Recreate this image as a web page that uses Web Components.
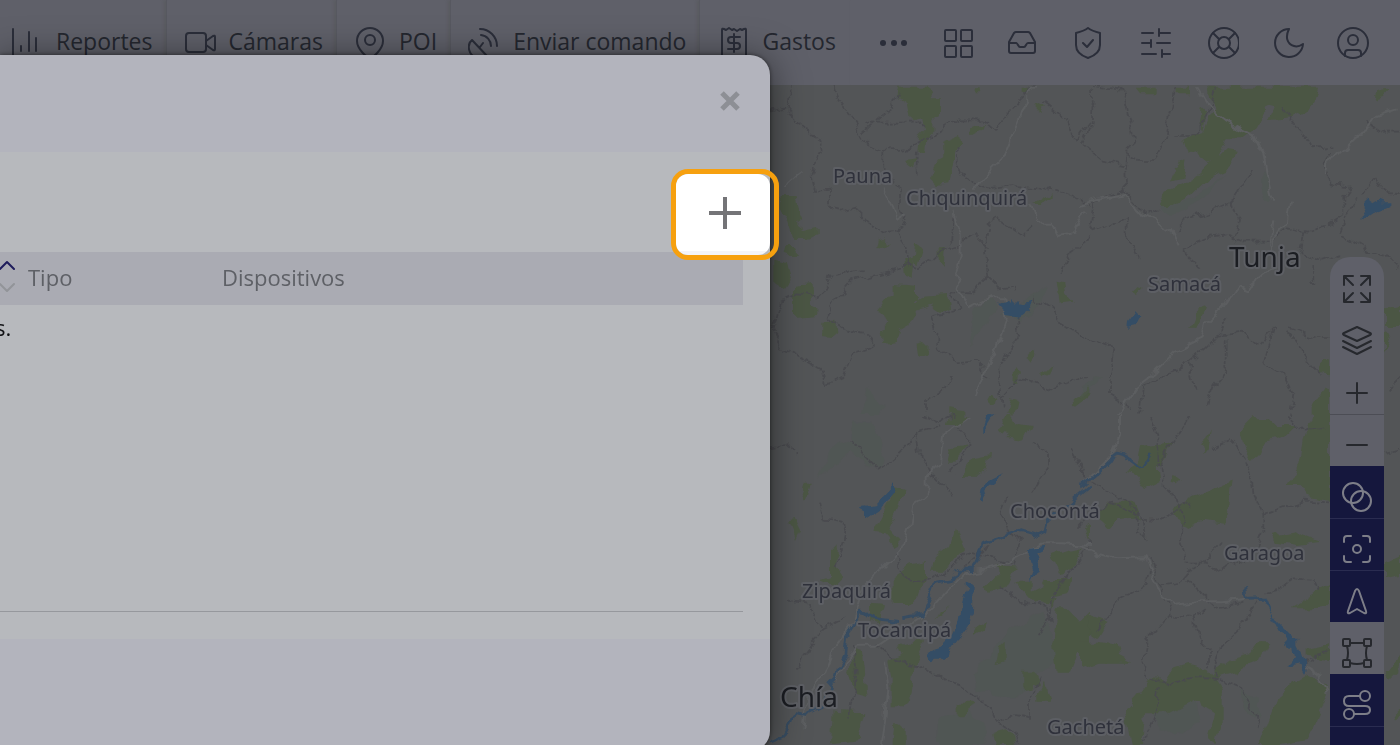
<!DOCTYPE html>
<html lang="es">
<head>
<meta charset="utf-8">
<meta name="viewport" content="width=device-width, initial-scale=1">
<title>Geocercas</title>
<style>
  :root {
    --color-bar: #5f6069;
    --color-ink: #2b2e3a;
    --color-text: #24272f;
    --color-map: #535557;
    --color-navy: #15173d;
    --color-panel: #b3b4bd;
    --color-sheet: #b7b9bd;
    --color-accent: #f6a00f;
  }

  html, body {
    height: 100%;
    margin: 0;
    overflow: hidden;
    font-family: "Open Sans", "Noto Sans", sans-serif;
  }

  fleet-app {
    height: 100%;
  }
</style>
</head>
<body>
<fleet-app>
  <fleet-topbar slot="bar">
    <fleet-nav-item icon="chart">Reportes</fleet-nav-item>
    <fleet-nav-item icon="camera">Cámaras</fleet-nav-item>
    <fleet-nav-item icon="pin">POI</fleet-nav-item>
    <fleet-nav-item icon="dish">Enviar comando</fleet-nav-item>
    <fleet-nav-item icon="receipt">Gastos</fleet-nav-item>
  </fleet-topbar>
  <fleet-map></fleet-map>
  <fleet-dialog slot="dialog">
    <fleet-spotlight slot="tools"></fleet-spotlight>
    <fleet-table></fleet-table>
  </fleet-dialog>
</fleet-app>

<script>
const icons = {
  chart: '<path d="M2 2v28M10 19v5M18 5v19M25 11v13"/>',
  camera: '<rect x="2" y="6" width="20" height="19" rx="3"/><path d="M22 14l7-5q2-1 2 1v12q0 2-2 1l-7-5"/>',
  pin: '<path d="M16 31C13 31 3 22 3 14a13 13 0 0 1 26 0C29 22 19 31 16 31z"/><circle cx="16" cy="13" r="5"/>',
  dish: '<path d="M4 13c-6 5-3 15 4 18 5 2 9 1 11-2zM12 20l3-4M12 2a17 17 0 0 1 17 17M13 8a11 11 0 0 1 10 11"/>',
  receipt: '<path d="M5 31V3q0-2 2-1l2 1 3-2 3 2 2-1 3 2 3-2 2 1 2-1q2-1 2 1v28"/><path d="M23 10H14q-3 0-3 3t3 3h6q3 0 3 3t-3 3h-9M17 7v18"/>',
  dots: '<g fill="currentColor" stroke="none"><circle cx="5" cy="16" r="3"/><circle cx="16" cy="16" r="3"/><circle cx="26" cy="16" r="3"/></g>',
  grid: '<rect x="2" y="3" width="11" height="11" rx="1"/><rect x="18" y="3" width="11" height="11" rx="1"/><rect x="2" y="19" width="11" height="11" rx="1"/><rect x="18" y="19" width="11" height="11" rx="1"/>',
  inbox: '<path d="M6 6q1-1 2-1h12q1 0 2 1l5 9v9q0 2-2 2H3q-2 0-2-2v-9zM1 16h7q1 0 2 2t2 2h4q1 0 2-2t2-2h7"/>',
  shield: '<path d="M15 1c4 3 8 4 12 5v12c0 7-6 11-12 13C9 29 3 25 3 18V6c4-1 8-2 12-5zM10 16l4 4 6-7"/>',
  sliders: '<path d="M2 6h11M19 6h11M19 2v7M2 16h9M11 13v7M17 16h13M2 27h14M22 27h8M22 23v7"/>',
  buoy: '<circle cx="17" cy="16" r="15"/><circle cx="17" cy="16" r="6"/><path d="M6 6l6 6M28 6l-6 6M6 26l6-6M28 26l-6-6"/>',
  moon: '<path d="M17 2A14 14 0 1 0 31 17c-3 2-6 3-9 2-7-2-9-9-5-17z"/>',
  user: '<circle cx="16" cy="16" r="15"/><circle cx="16" cy="13" r="5"/><path d="M8 29v-3q0-3 3-3h10q3 0 3 3v3"/>',
  expand: '<path d="M3 12V3h9M3 3l9 9M20 3h9v9M29 3l-9 9M3 20v9h9M3 29l9-9M29 20v9h-9M29 29l-9-9"/>',
  layers: '<path d="M16 2l13 6q2 1 0 2l-13 6L3 10q-2-1 0-2zM2 16l14 7 14-7M2 22l14 7 14-7"/>',
  plus: '<path d="M16 6v20M6 16h20"/>',
  minus: '<path d="M6 16h20"/>',
  circles: '<circle cx="12" cy="12" r="10"/><circle cx="20" cy="20" r="10"/>',
  focus: '<path d="M3 9V6q0-3 3-3h4M22 3h4q3 0 3 3v3M29 23v3q0 3-3 3h-4M10 29H6q-3 0-3-3v-3"/><circle cx="16" cy="16" r="4"/>',
  arrow: '<path d="M16 4q1 0 2 2l7 20q1 3-2 2l-7-4-7 4q-3 1-2-2l7-20q1-2 2-2z"/>',
  nodes: '<path d="M9 6h14M26 9q-2 7 0 14M9 26q7 2 14 0M6 9q2 7 0 14"/><g><rect x="2" y="2" width="7" height="7" rx="1"/><rect x="23" y="2" width="7" height="7" rx="1"/><rect x="2" y="23" width="7" height="7" rx="1"/><rect x="23" y="23" width="7" height="7" rx="1"/></g>',
  route: '<circle cx="24" cy="7" r="5"/><circle cx="8" cy="25" r="5"/><path d="M19 7H8q-5 0-5 5t5 5h16q5 0 5 4t-5 4H13"/>',
  ring: '<circle cx="16" cy="18" r="8"/>',
};

const icon = (name) => `<svg viewBox="0 0 32 32" aria-hidden="true">${icons[name]}</svg>`;

const iconStyle = `
  svg {
    display: block;
    flex: none;
    width: 32px;
    height: 32px;
    fill: none;
    stroke: currentColor;
    stroke-width: 2;
    stroke-linecap: round;
    stroke-linejoin: round;
  }

  button {
    margin: 0;
    padding: 0;
    border: none;
    background: none;
    color: inherit;
    font: inherit;
    cursor: pointer;
  }
`;

/** Page frame: bar on top, map below, dialog above both */
customElements.define('fleet-app', class extends HTMLElement {
  constructor() {
    super();
    this.attachShadow({ mode: 'open' }).innerHTML = `<style>
  :host {
    display: grid;
    grid-template-rows: 85px 1fr;
    background: var(--color-map);
  }
</style>
<slot name="bar"></slot>
<slot></slot>
<slot name="dialog"></slot>`;
  }
});

customElements.define('fleet-topbar', class extends HTMLElement {
  constructor() {
    super();
    const actions = [
      ['dots', 'Más'], ['grid', 'Aplicaciones'], ['inbox', 'Bandeja'], ['shield', 'Seguridad'],
      ['sliders', 'Ajustes'], ['buoy', 'Ayuda'], ['moon', 'Modo oscuro'], ['user', 'Cuenta'],
    ];
    this.attachShadow({ mode: 'open' }).innerHTML = `<style>
  ${iconStyle}
  :host {
    display: flex;
    justify-content: space-between;
    background: var(--color-bar);
    color: var(--color-ink);
  }

  nav {
    display: flex;
  }

  .actions {
    display: flex;
    align-items: center;
    gap: 33px;
    padding-right: 31px;
  }

  .sliders {
    padding: 0 2px;
  }
</style>
<nav><slot></slot></nav>
<div class="actions">
  ${actions.map(([name, label]) => `<button class="${name}" type="button" aria-label="${label}">${icon(name)}</button>`).join('')}
</div>`;
  }
});

customElements.define('fleet-nav-item', class extends HTMLElement {
  constructor() {
    super();
    this.attachShadow({ mode: 'open' }).innerHTML = `<style>
  ${iconStyle}
  :host {
    display: flex;
    border-left: 1px solid #575860;
    box-shadow: -2px 0 3px #5a5b60;
  }

  :host(:first-child) {
    border-left: none;
  }

  a {
    display: flex;
    align-items: center;
    gap: 13px;
    padding: 0 13px 0 17px;
    color: var(--color-text);
    font-size: 23px;
    line-height: 32px;
    text-decoration: none;
    white-space: nowrap;
  }

  :host(:first-child) a {
    padding-left: 11px;
  }

  svg {
    color: var(--color-ink);
  }

  span {
    padding-bottom: 3px;
  }
</style>
<a href="#">${icon(this.getAttribute('icon'))}<span><slot></slot></span></a>`;
  }
});

// Terrain is kept in four quadrants, each with its own 960x990 grid
const tiles = [
  {
    x: 770, y: 0,
    green: `M385 5h85l10 35 30 0 0 50-20 15 0 30-20 20 -5 45-20 5 5-50 15-15-5-40-20-5-20 10-10-50-30-20z
      M520 170l50-20 5 30-20 15-10 50-10 50-35 5-20-20 20-50 20-10z M590 155l10-25 45-10-5 20-30 15z
      M620 10h18v15h-18z M755 8h25v18h-25z M800 50l25 15-10 15-15-5z M35 330l45 0 5 40 15 35-20 15 20 15 40-10 0 25-25 12-45 0-15-50-20-30z
      M40 480l35 0 15 30-30 0-25-10z M10 530l40 10 15 45-20 30-35-25z M75 605l50-5 0 55 20 15 0 20-70 5z M160 710l42 0 3 45-45-5z
      M345 640l20-5 0-38 70 5 0 50 25-20 75-5 5 45-20 10-30-20-40 10-30 40-35 20-10 40-35 5-5-35 20-30-10-25-30-10z
      M400 530l30-5-5 60-20-10z M435 475l25 15-15 50-15-5z M500 490l25 0-5 50-20-20z M330 460l30 20-10 10-25-5z
      M440 780l20-5 20 20-5 15-30 5z M785 360l60-35 0 10-35 25z M860 590l20 5 5 30 20 25-35 5z M770 815l20-15 12 15-15 20z
      M735 850l18 10-5 40-15-5z M810 870l35-35-10 30-20 12z M655 940l20-15 10 20-20 15z M720 940l20 5-10 45-20-5z M405 228l35-5-10 25z
      M905 960l50-55 0 30-40 30z M535 970l45 5 0 15-45 0z`,
    haze: 'M300 900l20 60 25 10-20 20-50 0z M660 640l20 20-30 50-50 70 10-100z M690 690l40-20 100-70-20 60-60 50z',
    edge: `M60 0l-5 90 50 40 45 30 5 40-30 70 10 45 45-5 0 60 30 10 40-15 60 60 40 25 30-5 30 40 5 60-60 15-110 30-50 60-20 50 60 40 60 10 20 30-70 20-30 80-50 20-10-50-60-30-60-30-30-60 20-80 60-25 50 10 40-40 10-20 90-20
      M190 5l20 50 50 70 20 40 50 30 80-5 60-30 30-20 70-40 60 0 40 35 80-90 60-60 M280 140l70-60 40-50 M285 110l160 0 20 20
      M340 200l0 50 50 60 0 70 20 10-30 60 M440 200l0 70 M560 190l0 50 30 40 60 30 80-10 100 10 80 20 50 30 M550 390l-10 90
      M410 540l40 10 60-50 60-20 45-30 40 40 M655 580l-10-80 15-90 20-10 50 30 30 20 20-20 M655 580l30 30 50-5 0 20 M655 580l-50 40-60-5 20 60-80 20 20 50 0 40 50 50 60-5 40 50 M740 690l5 60-60 100 10 120
      M790 640l60 40 30 40 70 40 M870 560l30-60 60-40 M820 50l60 50 40 70 40-60 M540 870l-15 40-60 40 0 30 M690 940l60-60 50 20 30 20 60-30 70-20 M0 80l60-15`,
    road: 'M770 40l-20 60-20 50-30 70-60 60-30 40 M770 30l30-30 M550 380l25 70 0 70-20 50 25 60 20 40 60-30 40 0 10 70-30 80-30 60-30 80 M340 310l30 60 10 35 30-20 M780 360l20 50 45 0 20 40 50-10 30-60 M40 310l60-50',
    water: 'M685 655l25-10 10 5 0-8 15 15 15-15 5 12 32-10 0 15-12 20-30 22-35-5-5-20z',
    river: '',
  },
  {
    x: 1080, y: 0,
    green: `M375 5h345l-10 40-25 30-50 25-65 5 15-35-40-10 5 55-60 45-50 0-25 60-30 20-25-20-10-30-30 10-10-40 60-20 20-50 20-20-30-40z
      M435 195l32 5-20 50-60 25-50 50-60 35-40 0 20-40 40-20 60-30z M270 290l15-40 35-25-10 55z M165 8h65l0 20-50 0z M290 8h40v20h-40z
      M365 70l15 15-10 50-10-20z M150 620l20-20 15 5-20 25z M328 725l20-50 30-10-15 40-20 20z M885 40l10-22 40-8-20 22z
      M715 840l15-15 20 5 0 35-40-5z M695 970l40-60 15 10 0 70-55 0z M915 670l45-10 0 60-45 0z M912 740l20 10-20 50z`,
    haze: 'M240 360l100-20 100-80-60 70-110 70z M540 290l15-25 15 40 0 40-20 0z M0 910l40-30 20-10-30 50-30 20z',
    edge: `M40 10l-5 100-30 70 60 50 70 15 5-50 20-20-10-60-20-80-10-25-80-10 M290 5l-20 70-15 80-30 70-50 0-40-20 M280 150l70 0 30-60 30-80
      M135 240l5 80 60 70 40-20 M140 320l-100 30-10 90 60-20 50-20 M140 400l0 50 40 70 M300 490l80-30 60-10 50 20 80 0 50-40 60 10 60-15 50-30 0-60 20-30-60-10-20-60 20-30 M520 250l-60 100-80 30-60 20-30 50 M460 350l20 60-20 50
      M300 490l60 60 M610 70l50 70 40 50 60-10 M860 110l40 30 60 0 M840 330l20-30 30-20 30 50 40 5 M785 450l40 20 50 30 40 10 40 40 M780 440l50-100 M670 440l-10 60 60 30 60-20 M700 540l0 60
      M0 750l100 40-10 80 0 60 70 40 M350 920l-20-90-70 40-70 30-10 90 M330 830l70-60 40-70 M410 750l80-10 40 40 50-50-30 100 60 40 30 60-10 60 M440 760l0 90-40 50-20 60 M620 740l50 60 50 70 M630 730l60 20 60 0 M920 910l40-40`,
    road: 'M350 10l30 50 60 50 80 40 30 60 10 60 20 80 M950 70l-60 20-40 60-40 20-40 40-30 20-5 40 M0 360l50-15 90-15 40 55 60 30 30 20 20 40 M630 350l-10 60-40 50-5 90-80 60-20-10-40 60-60 60-10 40-80 40-60 60-60 50-60 90 M580 400l-10 90',
    water: 'M860 340l10 5 10 8 20-12 10 5 18 0 0 15-30 12-30 20-20 25 0-20 12-20z M160 688l8 8 16 0-14 28-28 5 2-18z',
    river: '',
  },
  {
    x: 770, y: 330,
    green: `M540 0h50l-20 30-40 0z M690 40l30-50 20 30 45 10-25 50-40-5z M535 140l10-40 55-10-50 50z M570 185l40-55 50-10-10 40-30 25z
      M345 280l30-60 25 5-15 60-30 60 35 40-15 8-30-35-35-5z M95 240l10-40 20 0-15 60z M55 320l20-5 15 30-15 30z M480 470l15-40 45-40 15-50 15 25 15 35-30 30-30 40z
      M150 490l30-10 0-80 20-20 0 80 20 30-20 20z M365 490l50-35 50-10 0 40-20 60-30 25-50 0z M490 610l50-35-30 30z M640 520l50-50-10-20 60 5-20 50-60 25z
      M610 670l10-30 40-25-20 35z M735 500l50 0 0 30 30-15 10-20 80 0-15 40-50 10 0 20-50-5z M830 550l30 0-10 30z M690 700l20-20 0 60-30 10z M845 420l90-20-30 60-30 20z M860 580l30 0 40 40 30-30 0 100-40 30-20 50-40 0-10-80z M255 705l20 5 15 130-35-10-20-60z
      M385 690l30-10 50 0-30 60-10 100-20 40-40 0 0-90-10-50 40-20z M185 890l95 5-10 40 10 40-100 10z M300 560l45 5-15 60-30-10z M370 920l40 20 0 50-45 0z M560 860l50 0-30 50-20 0z M805 840l20-40 15 60-35 0z M790 770l-30 0 0 50 50-10z M670 950l40-10 30 50-60 0z M945 340l15-10 0 50z`,
    haze: 'M250 20l60 0 30 60-10 90-40-20-50-40-70 60-30 20 40-80 60-40z M720 640l100-50 50 150-70 40-60 70-40 0-80-30-10-40z M500 910l100-20 60 60-20 40-140 0z',
    edge: `M460 0l50 20 40-20 30-30 M240 70l80 100 60-50 70-70 60-20 M440 60l10 70 60 70 40 50 M545 170l60-80-40-50 M780 80l60 40 0 30-60 90 M900 100l60 100 M710 250l-20 50 30 50 30 30-20 70-90-30-60-10-40 60-90 30-60-20-10-70 M580 460l80-70
      M150 260l10 50 70 15-10 60-20 80 M0 100l50-10 30 30 M60 550l50 10 50 80 60-30 M160 640l-60 80-20 50 M320 690l70 50 90 30 60 30 60 20 60 60 20 40 40 20 40 80 M960 380l-60 90-50 60-10 80-40 50 M690 510l60 50 80 10 10 50 M250 690l10 80-10 80-10 60 M780 920l0-60 30-70 M680 920l50-20 50 10`,
    road: 'M600 0l-40 30-40 30-10 80-40 40 0 60-40 30-10 70-20 60-60 60-60 60-30 100-60 80-30 80-50 60-10 110 M960 390l-80-5-60 0-130 70-110 20-100 110-60 40-100 70-60 0-40 60-20 40 M345 740l10 80-10 100-10 70',
    water: `M375 205l0 25-25 30-35 25-12 25-15-5 0-10-15-8 15-18 30-5z M670 0l-15 25-18 30 0-20 10-30z M695 178l-15 25-25 20-15 20-5 20-8-5 8-40 20-20z
      M590 500l18 5-2 90-20 50-45 60-5 25-15 5-10-10-20 0-10 15-12-15 20-25 30-10 20-20 30-60 10-60 12-20z M780 400l50-8-5 10-20 10 8 20-5 40-15 5-12 25 0-20 8-20-10-35z`,
    river: 'M960 215l-60 50-70 50-5 40-20 10-50-15-40 10-50 15-25 10-20 60-15 20-40 0-20 30-50 10-15 40-20 50-60 10 M390 620l-80-10-20-20-20-2-20 40-20 30-5 60-15 30-10 40-20 20-10 60-60 30-40-5-10 30-20 40-50 20',
  },
  {
    x: 1080, y: 330,
    green: `M480 50l40-40 50 0 20 20 60 0-30 30-60 20-20 40-25 15-20-30z M700 0h50v260l-60-10-30-40-40 0 40-70 10-60z M180 100l100-15-20 40-30 30 5 50-40 20-35-50-20-5 30-20z
      M275 270l40-10 80-40 60-20-20 130-60-10-70 20z M280 180l25 10-15 15-15-5z M360 100l30-60-10 60-15 20z M580 360l70-15 20 15 50 20-70 10-60-10z M640 580l110-70 0 60-60 10z M540 990l50-140 60-55 30-20 60 30 0 30-40 100-20 40-80 15z
      M400 770l50-40 60-15 20-30 35 0-20 40-50 20-20 30-90 20z M225 780l20 20 20-30 60-20 60 15 40 60 0 90-20 80-20-30 20-70-60-40-80 40-70 0-10 110-30-5-20-110z M30 300l60-40 70 0 20 50-70 5-30 30z M25 600l60 20-30 50-30-20z M0 680l50 0 60 10 10 30 40 20-110 0-50 20z M915 440l45-20 0 60-45 10z M680 700l70-15 0 50-70-10z M920 770l40-50 0 40-30 25z M940 910l20-30 0 20z`,
    haze: 'M200 860l60-20 90 20 10 60-50 40-80-30z M480 830l60 20 0 60-40-20z',
    edge: `M330 0l-50 80-40 70 10 60 40 40 20 60-10 70 20 60 60 0 30 30 60-30 30 5 M210 0l25 60 0 90 M390 100l60-25 20 20 40 60 10 80 30 60 0 60-20 50 M550 300l120-40 80 5 M0 160l30 40 60 30 50 30 50 50 10 60-30-10 0-60-70-40-60 30-40 50
      M210 430l30 80 60-10 20-30 60-40 50-50 M240 510l30 90 70 10 40-30 M320 490l60 60 30 30 80-20 M530 560l-60 90-50 50-20 100 M340 610l20 60 30 30 0 60 M270 600l-70 80-10 60 20 50 M220 790l50 20 70-20 60 0 80 30 40 60 20 60 M240 820l-20 100-30 60 M210 450l-10 60-80 40-40 60-30 40 M560 530l40-10 40-30 60 5 20 40 M670 750l40-30 40-10 M620 0l30 30 20 20 60-10 M190 310l60 10 60-60 20 20 M920 110l40-10`,
    road: 'M120 0l0 60-30 70-40 40-50 50 M0 390l50 30 60 10 90-3 10 30 30 80 40 30 70-8 70 0 80-8 M670 750l50 30 20 50',
    water: 'M545 545l10 0 20 50 20 30 20 20 20 20 20 0 0 30 10 20 15 50-5 8-15-25-25 5-10-2 20-25-5-25-15 0-10-25-20-35-20-40z',
    river: 'M0 220l60-50 30-30 20-35 20 5 20 30 20 15 20-5 20-30 M497 520l5 30 45-3',
  },
];

const towns = [
  [833, 98, 'Pauna'], [906, 120, 'Chiquinquirá'], [1148, 206, 'Samacá'], [1010, 433, 'Chocontá'],
  [1224, 475, 'Garagoa'], [802, 513, 'Zipaquirá'], [858, 552, 'Tocancipá'], [1047, 649, 'Gachetá'],
];

const cities = [[1229, 182, 'Tunja'], [780, 622, 'Chía']];

customElements.define('fleet-map', class extends HTMLElement {
  constructor() {
    super();
    const drawTile = (t) => `<svg x="${t.x}" y="${t.y}" width="320" height="330" viewBox="0 0 960 990">
      <path class="haze" d="${t.haze}"/>
      <path class="green" d="${t.green}"/>
      <path class="edge" d="${t.edge}"/>
      <path class="road" d="${t.road}"/>
      <path class="river" d="${t.river}"/>
      <path class="water" d="${t.water}"/>
    </svg>`;
    const drawLabel = ([x, y, name]) => `<text x="${x}" y="${y}">${name}</text>`;
    this.attachShadow({ mode: 'open' }).innerHTML = `<style>
  :host {
    display: block;
    position: relative;
    overflow: hidden;
    background: var(--color-map);
  }

  .canvas {
    position: absolute;
    width: 100%;
    height: 100%;
  }

  path {
    fill: none;
    stroke-linejoin: round;
  }

  .haze { fill: #4d5850; opacity: .4; }
  .green { fill: #4b5644; }
  .edge { stroke: #494a4e; stroke-width: 5; stroke-dasharray: 14 4; }
  .road { stroke: #5c5e60; stroke-width: 6; }
  .river { stroke: #374c61; stroke-width: 8; }
  .water { fill: #344d65; }

  text {
    font-family: "Noto Sans", "Open Sans", sans-serif;
    font-size: 20px;
    font-weight: 400;
    fill: #2f313b;
    stroke: #5d5f64;
    stroke-width: 4;
    stroke-linejoin: round;
    paint-order: stroke;
  }

  .cities text {
    font-size: 28px;
    fill: #1b1d22;
  }

  fleet-rail {
    position: absolute;
    top: 26%;
    right: 16px;
  }
</style>
<svg class="canvas" viewBox="0 0 1400 660" preserveAspectRatio="xMaxYMin slice">
  <!-- roughens the drawn outlines so borders and forests look natural -->
  <filter id="rough" x="0" y="0" width="100%" height="100%" color-interpolation-filters="sRGB">
    <feTurbulence type="fractalNoise" baseFrequency="0.07" numOctaves="2" seed="4"/>
    <feDisplacementMap in="SourceGraphic" scale="12" xChannelSelector="R" yChannelSelector="G"/>
  </filter>
  <g filter="url(#rough)">${tiles.map(drawTile).join('')}</g>
  <g>${towns.map(drawLabel).join('')}</g>
  <g class="cities">${cities.map(drawLabel).join('')}</g>
</svg>
<fleet-rail></fleet-rail>`;
  }
});

/** Map tools, navy ones are switched on */
customElements.define('fleet-rail', class extends HTMLElement {
  constructor() {
    super();
    const tools = [
      ['expand', 'Pantalla completa', ''], ['layers', 'Capas', ''], ['plus', 'Acercar', ''], ['minus', 'Alejar', 'line'],
      ['circles', 'Agrupar', 'on'], ['focus', 'Centrar', 'on line'], ['arrow', 'Seguir', 'on line'],
      ['nodes', 'Geocercas', ''], ['route', 'Rutas', 'on'], ['ring', 'Zonas', 'on line'],
    ];
    this.attachShadow({ mode: 'open' }).innerHTML = `<style>
  ${iconStyle}
  :host {
    display: flex;
    flex-direction: column;
    width: 54px;
    padding-top: 1px;
    border-radius: 20px 20px 0 0;
    background: var(--color-bar);
    color: #26282d;
  }

  button {
    display: flex;
    justify-content: center;
    box-sizing: border-box;
    height: 52px;
    padding-top: 14px;
    border-top: 1px solid transparent;
  }

  .line {
    border-top-color: #4c4d55;
  }

  .on {
    border-top-color: var(--color-navy);
    background: var(--color-navy);
    color: #7d7e88;
  }

  .on.line {
    border-top-color: #2a2c50;
  }
</style>
${tools.map(([name, label, state]) => `<button class="${state}" type="button" aria-label="${label}">${icon(name)}</button>`).join('')}`;
  }
});

customElements.define('fleet-dialog', class extends HTMLElement {
  constructor() {
    super();
    this.attachShadow({ mode: 'open' }).innerHTML = `<style>
  ${iconStyle}
  :host {
    display: flex;
    flex-direction: column;
    position: fixed;
    inset: 55px 45% -6px 0;
    border-radius: 0 20px 20px 0;
    background: var(--color-panel);
    box-shadow: 0 0 4px rgba(0, 0, 0, .5), 0 4px 36px rgba(0, 0, 0, .5);
  }

  header {
    display: flex;
    align-items: center;
    justify-content: flex-end;
    height: 97px;
    padding: 0 24px;
    box-sizing: border-box;
  }

  header svg {
    color: #8d8f95;
    stroke-width: 5;
    stroke-linecap: butt;
  }

  header button {
    padding-bottom: 6px;
  }

  main {
    display: flex;
    flex: 1;
    flex-direction: column;
    padding: 0 27px 27px 0;
    background: var(--color-sheet);
  }

  .tools {
    position: relative;
    height: 100px;
  }

  .list {
    flex: 1;
    border-bottom: 1px solid #96989d;
  }

  footer {
    height: 112px;
  }
</style>
<header>
  <button type="button" aria-label="Cerrar"><svg viewBox="0 0 32 32" aria-hidden="true"><path d="M8 8l16 16M24 8L8 24"/></svg></button>
</header>
<main>
  <div class="tools"><slot name="tools"></slot></div>
  <div class="list"><slot></slot></div>
</main>
<footer></footer>`;
  }
});

/** Guided tour frame, it reaches past the dialog edge */
customElements.define('fleet-spotlight', class extends HTMLElement {
  constructor() {
    super();
    this.attachShadow({ mode: 'open' }).innerHTML = `<style>
  ${iconStyle}
  :host {
    display: flex;
    position: absolute;
    z-index: 1;
    top: 17px;
    right: -36px;
    box-sizing: border-box;
    width: 108px;
    height: 91px;
    padding-right: 4px;
    border: 5px solid var(--color-accent);
    border-radius: 17px;
  }

  button {
    display: flex;
    flex: 1;
    justify-content: center;
    padding: 22px 0 0 3px;
    border-radius: 12px;
    background: linear-gradient(#fff 77px, #f4f4f8 77px);
    color: #747477;
  }

  svg {
    width: 34px;
    height: 34px;
    stroke-width: 4;
    stroke-linecap: butt;
  }
</style>
<button type="button" aria-label="Agregar"><svg viewBox="0 0 34 34" aria-hidden="true"><path d="M17 1v32M1 17h32"/></svg></button>`;
  }
});

customElements.define('fleet-table', class extends HTMLElement {
  constructor() {
    super();
    this.attachShadow({ mode: 'open' }).innerHTML = `<style>
  ${iconStyle}
  :host {
    display: block;
    margin-left: -5px;
  }

  table {
    width: 100%;
    border-collapse: collapse;
    table-layout: fixed;
    font-size: 22px;
    line-height: 28px;
    text-align: left;
  }

  th {
    box-sizing: border-box;
    height: 53px;
    padding: 0 4px 4px;
    background: #aaabb3;
    color: #5e6066;
    font-weight: 400;
  }

  th:first-child {
    width: 29px;
    padding-bottom: 0;
  }

  th:nth-child(2) {
    width: 194px;
  }

  td {
    padding: 8px 0;
    color: #101114;
  }

  svg {
    width: 16px;
    height: 34px;
  }

  .down {
    stroke: #929499;
  }

  .up {
    stroke: #1f1c5c;
  }
</style>
<table>
  <thead>
    <tr>
      <th scope="col"><button type="button" aria-label="Ordenar"><svg viewBox="0 0 16 34" aria-hidden="true"><path class="up" d="M1 10l7-7 7 7"/><path class="down" d="M1 25l7 7 7-7"/></svg></button></th>
      <th scope="col">Tipo</th>
      <th scope="col">Dispositivos</th>
    </tr>
  </thead>
  <tbody>
    <tr><td colspan="3">s.</td></tr>
  </tbody>
</table>`;
  }
});
</script>
</body>
</html>
